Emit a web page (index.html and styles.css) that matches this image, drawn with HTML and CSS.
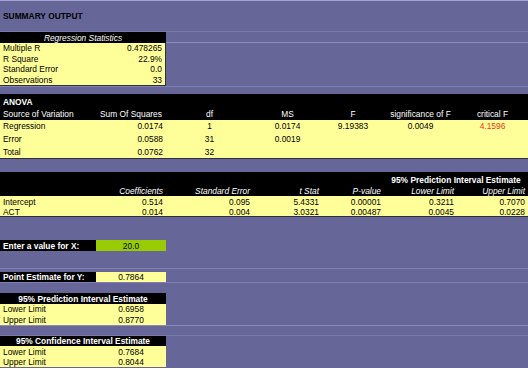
FILE: index.html
```html
<!DOCTYPE html>
<html lang="en">
<head>
    <meta charset="UTF-8">
    <meta name="viewport" content="width=device-width, initial-scale=1.0">
    <title>Summary Output</title>
    <link rel="stylesheet" href="styles.css">
</head>
<body>
    <div class="sheet">
        <!-- title -->
        <div class="row title-row rule-top rule-bottom">
            <div class="cell span2 bold">SUMMARY OUTPUT</div>
        </div>

        <!-- regression statistics -->
        <div class="row stat-head rule-bottom">
            <div class="cell span2 dark center italic">Regression Statistics</div>
        </div>
        <div class="row stat-row">
            <div class="cell yellow">Multiple R</div>
            <div class="cell yellow right edge">0.478265</div>
        </div>
        <div class="row stat-row">
            <div class="cell yellow">R Square</div>
            <div class="cell yellow right edge">22.9%</div>
        </div>
        <div class="row stat-row">
            <div class="cell yellow">Standard Error</div>
            <div class="cell yellow right edge">0.0</div>
        </div>
        <div class="row stat-row last">
            <div class="cell yellow">Observations</div>
            <div class="cell yellow right edge">33</div>
        </div>
        <div class="row gap-8 rule-top"></div>

        <!-- anova -->
        <div class="row anova-title dark">
            <div class="cell bold">ANOVA</div>
        </div>
        <div class="row anova-head dark">
            <div class="cell">Source of Variation</div>
            <div class="cell center">Sum Of Squares</div>
            <div class="cell center">df</div>
            <div class="cell center">MS</div>
            <div class="cell center">F</div>
            <div class="cell center">significance of F</div>
            <div class="cell center">critical F</div>
        </div>
        <div class="row anova-row yellow">
            <div class="cell">Regression</div>
            <div class="cell right">0.0174</div>
            <div class="cell center">1</div>
            <div class="cell center">0.0174</div>
            <div class="cell center">9.19383</div>
            <div class="cell center">0.0049</div>
            <div class="cell center red">4.1596</div>
        </div>
        <div class="row anova-row yellow">
            <div class="cell">Error</div>
            <div class="cell right">0.0588</div>
            <div class="cell center">31</div>
            <div class="cell center">0.0019</div>
        </div>
        <div class="row anova-row yellow last">
            <div class="cell">Total</div>
            <div class="cell right">0.0762</div>
            <div class="cell center">32</div>
        </div>
        <div class="row gap-13"></div>

        <!-- coefficients -->
        <div class="row coef-title dark">
            <div class="cell pi-span center bold">95% Prediction Interval Estimate</div>
        </div>
        <div class="row coef-head dark">
            <div class="cell"></div>
            <div class="cell right italic">Coefficients</div>
            <div class="cell right italic">Standard Error</div>
            <div class="cell right italic">t Stat</div>
            <div class="cell right italic">P-value</div>
            <div class="cell right italic">Lower Limit</div>
            <div class="cell right italic">Upper Limit</div>
        </div>
        <div class="row coef-row yellow">
            <div class="cell">Intercept</div>
            <div class="cell right">0.514</div>
            <div class="cell right">0.095</div>
            <div class="cell right">5.4331</div>
            <div class="cell right">0.00001</div>
            <div class="cell right">0.3211</div>
            <div class="cell right">0.7070</div>
        </div>
        <div class="row coef-row yellow last">
            <div class="cell">ACT</div>
            <div class="cell right">0.014</div>
            <div class="cell right">0.004</div>
            <div class="cell right">3.0321</div>
            <div class="cell right">0.00487</div>
            <div class="cell right">0.0045</div>
            <div class="cell right">0.0228</div>
        </div>
        <div class="row gap-23"></div>

        <!-- prediction for a chosen x -->
        <div class="row small-row">
            <div class="cell dark bold">Enter a value for X:</div>
            <div class="cell green center">20.0</div>
        </div>
        <div class="row gap-17"></div>
        <div class="row gap-4 rule-top"></div>
        <div class="row small-row">
            <div class="cell dark bold">Point Estimate for Y:</div>
            <div class="cell yellow center">0.7864</div>
        </div>
        <div class="row gap-11 rule-top"></div>

        <div class="row small-row">
            <div class="cell span2 dark center bold">95% Prediction Interval Estimate</div>
        </div>
        <div class="row small-row">
            <div class="cell yellow">Lower Limit</div>
            <div class="cell yellow center">0.6958</div>
        </div>
        <div class="row small-row">
            <div class="cell yellow">Upper Limit</div>
            <div class="cell yellow center">0.8770</div>
        </div>
        <div class="row gap-11 rule-top rule-bottom"></div>

        <div class="row small-row">
            <div class="cell span2 dark center bold">95% Confidence Interval Estimate</div>
        </div>
        <div class="row small-row">
            <div class="cell yellow">Lower Limit</div>
            <div class="cell yellow center">0.7684</div>
        </div>
        <div class="row small-row">
            <div class="cell yellow">Upper Limit</div>
            <div class="cell yellow center">0.8044</div>
        </div>
    </div>
</body>
</html>
```

FILE: styles.css
```css
* {
    margin: 0;
    padding: 0;
    box-sizing: border-box;
}
body {
    background: #666699;
    font-family: "Liberation Sans", Arial, sans-serif;
    font-size: 8.4px;
    color: #000;
    width: 528px;
    height: 368px;
    overflow: hidden;
}
.sheet {
    width: 528px;
}
.row {
    display: grid;
    grid-template-columns: 96px 70px 87px 69px 62px 73px 71px;
    background-repeat: no-repeat;
}
.cell {
    display: flex;
    align-items: center;
    padding: 0 3px;
    white-space: nowrap;
}
.span2 {
    grid-column: span 2;
}
.pi-span {
    grid-column: 6 / span 2;
}
.center {
    justify-content: center;
}
.right {
    justify-content: flex-end;
}
.bold {
    font-weight: bold;
}
.italic {
    font-style: italic;
}
.dark {
    background: #000;
    color: #fff;
}
.yellow {
    background: #ffff99;
}
.green {
    background: #99cc00;
}
.red {
    color: #ee3322;
}

/* faint sheet gridlines on the empty rows */
.rule-top {
    background-image: linear-gradient(#8080b4, #8080b4);
    background-size: 100% 1px;
    background-position: top;
}
.rule-bottom {
    background-image: linear-gradient(#7878ac, #7878ac);
    background-size: 100% 1px;
    background-position: bottom;
}
.rule-top.rule-bottom {
    background-image: linear-gradient(#8a8abc, #8a8abc), linear-gradient(#7878ac, #7878ac);
    background-size: 100% 1px, 100% 1px;
    background-position: top, bottom;
}
.title-row {
    height: 32px;
}
.title-row.rule-top.rule-bottom {
    background-image: linear-gradient(#a4a4d2, #a4a4d2), linear-gradient(#7878ac, #7878ac);
}
.stat-head {
    height: 11px;
}
.stat-head.rule-bottom {
    background-image: linear-gradient(#8c8cc0, #8c8cc0);
}
.stat-row {
    height: 10.5px;
}
.stat-row .edge {
    border-right: 1px solid #2e2e40;
}
.stat-row.last {
    height: 11px;
}
.stat-row.last .cell {
    border-bottom: 1px solid #2e2e40;
}

.anova-title {
    height: 14px;
    padding-top: 2px;
}
.anova-head {
    height: 12px;
}
.anova-row {
    height: 13.3px;
}
.anova-row.last,
.coef-row.last {
    border-bottom: 1px solid #2e2e40;
}

.coef-title {
    height: 13px;
    padding-top: 2px;
}
.coef-head {
    height: 11px;
    padding-top: 1px;
}
.coef-row {
    height: 10.5px;
}

.small-row {
    height: 10.5px;
}
.gap-4 {
    height: 4px;
}
.gap-8 {
    height: 8px;
}
.gap-11 {
    height: 11px;
}
.gap-13 {
    height: 13px;
}
.gap-17 {
    height: 17px;
}
.gap-23 {
    height: 23px;
}
```
